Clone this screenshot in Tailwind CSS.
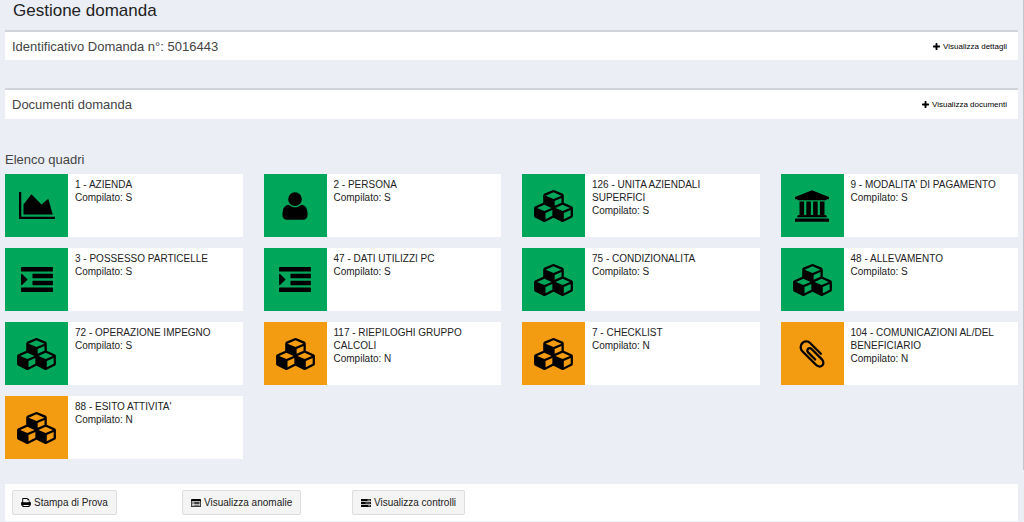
<!DOCTYPE html>
<html lang="it">
<head>
<meta charset="utf-8">
<meta name="viewport" content="width=device-width, initial-scale=1">
<title>Gestione domanda</title>
<script src="https://cdn.jsdelivr.net/npm/@tailwindcss/browser@4"></script>
</head>
<body class="relative min-h-screen overflow-x-hidden bg-[#ebeef5] font-['Liberation_Sans',Arial,sans-serif] text-[10px] leading-[13px] text-[#222]">

<!-- Shared icon symbols -->
<svg class="hidden" aria-hidden="true">
  <symbol id="area" viewBox="0 0 2048 1536"><path d="M2048 1408v128h-2048v-1536h128v1408h1920zm-384-1024l256 896h-1664v-576l448-576 576 576z"/></symbol>
  <symbol id="user" viewBox="0 0 1792 1792"><path d="M1600 1405q0 120-73 189.500t-194 69.500h-874q-121 0-194-69.500t-73-189.500q0-53 3.500-103.500t14-109 26.500-108.500 43-97.500 62-81 85.500-53.500 111.500-20q9 0 42 21.500t74.500 48 108 48 133.500 21.500 133.500-21.500 108-48 74.500-48 42-21.500q61 0 111.500 20t85.500 53.500 62 81 43 97.500 26.500 108.500 14 109 3.500 103.500zm-320-893q0 159-112.500 271.500t-271.500 112.500-271.500-112.500-112.500-271.500 112.500-271.500 271.500-112.500 271.500 112.500 112.500 271.500z"/></symbol>
  <symbol id="cubes" viewBox="0 0 2176 1792"><path fill-rule="evenodd" d="M640 1632l384-192v-314l-384 164v342zm-64-454l404-173-404-173-404 173zm1088 454l384-192v-314l-384 164v342zm-64-454l404-173-404-173-404 173zm-448-293l384-165v-266l-384 164v267zm-64-379l441-189-441-189-441 189zm1088 518v416q0 36-19 67t-52 47l-448 224q-25 14-57 14t-57-14l-448-224q-4-2-7-4-2 2-7 4l-448 224q-25 14-57 14t-57-14l-448-224q-33-16-52-47t-19-67v-416q0-38 21.500-70t56.500-48l434-186v-400q0-38 21.500-70t56.500-48l448-192q23-10 50-10t50 10l448 192q35 16 56.500 48t21.500 70v400l434 186q36 16 57 48t21 70z"/></symbol>
  <symbol id="bank" viewBox="-128 0 1920 1792"><path d="M832 0l960 384v128h-128q0 26-20.500 45t-48.500 19h-1526q-28 0-48.500-19t-20.500-45h-128v-128zm-704 640h256v768h128v-768h256v768h128v-768h256v768h128v-768h256v768h59q28 0 48.500 19t20.500 45v64h-1664v-64q0-26 20.500-45t48.500-19h59v-768zm1595 960q28 0 48.500 19t20.500 45v128h-1920v-128q0-26 20.500-45t48.500-19h1782z"/></symbol>
  <symbol id="indent" viewBox="0 0 1792 1408"><path d="M32 0h1728q32 0 32 32v192q0 32-32 32h-1728q-32 0-32-32v-192q0-32 32-32zM672 384h1088q32 0 32 32v192q0 32-32 32h-1088q-32 0-32-32v-192q0-32 32-32zM672 768h1088q32 0 32 32v192q0 32-32 32h-1088q-32 0-32-32v-192q0-32 32-32zM32 1152h1728q32 0 32 32v192q0 32-32 32h-1728q-32 0-32-32v-192q0-32 32-32zM352 704q0 14-9 23l-288 288q-9 9-23 9-32 0-32-32v-576q0-32 32-32 14 0 23 9l288 288q9 9 9 23z"/></symbol>
  <symbol id="clip" viewBox="0 0 1792 1792"><path d="M1596 1385q0 117-79 196t-196 79q-135 0-235-100l-777-776q-113-115-113-271 0-159 110-270t269-111q158 0 273 113l605 606q10 10 10 22 0 16-30.500 46.500t-46.500 30.500q-13 0-23-10l-606-607q-79-77-181-77-106 0-179 75t-73 181q0 105 76 181l776 777q63 63 145 63 64 0 106-42t42-106q0-82-63-145l-581-581q-26-24-60-24-29 0-48 19t-19 48q0 32 25 59l410 410q10 10 10 22 0 16-31 47t-47 31q-12 0-22-10l-410-410q-63-61-63-149 0-82 57-139t139-57q88 0 149 63l581 581q100 98 100 235z"/></symbol>
  <symbol id="plus" viewBox="0 0 1408 1408"><path d="M1408 608v192q0 96-96 96h-416v416q0 96-96 96h-192q-96 0-96-96v-416h-416q-96 0-96-96v-192q0-96 96-96h416v-416q0-96 96-96h192q96 0 96 96v416h416q96 0 96 96z"/></symbol>
  <symbol id="print" viewBox="0 0 1664 1536"><path fill-rule="evenodd" d="M384 1376h896v-192h-896zM352 736h960v-352h-160q-96 0-96-96v-128h-704zM1664 832v416q0 32-32 32h-192v160q0 96-96 96h-1024q-96 0-96-96v-160h-192q-32 0-32-32v-416q0-192 192-192v-544q0-96 96-96h736q96 0 160 64l152 152q72 72 72 160v264h64q192 0 192 192z"/></symbol>
  <symbol id="list" viewBox="0 0 1792 1408"><path fill-rule="evenodd" d="M160 0h1472q160 0 160 160v1088q0 160-160 160h-1472q-160 0-160-160v-1088q0-160 160-160zM128 384v832q0 64 64 64h1408q64 0 64-64v-832z"/><path d="M256 512h192v128h-192zM576 512h960v128h-960zM256 768h192v128h-192zM576 768h960v128h-960zM256 1024h192v128h-192zM576 1024h960v128h-960z"/></symbol>
  <symbol id="tasks" viewBox="0 0 1792 1408"><path fill-rule="evenodd" d="M64 0h1664q64 0 64 64v256q0 64-64 64h-1664q-64 0-64-64v-256q0-64 64-64zM1152 128v128h512v-128zM64 512h1664q64 0 64 64v256q0 64-64 64h-1664q-64 0-64-64v-256q0-64 64-64zM768 640v128h896v-128zM64 1024h1664q64 0 64 64v256q0 64-64 64h-1664q-64 0-64-64v-256q0-64 64-64zM1280 1152v128h384v-128z"/></symbol>
</svg>

<div class="absolute top-0 right-0 h-[470px] w-px bg-[#c3c6cd]"></div>

<main class="pr-1.5 pl-[5px]">
  <h1 class="h-[30px] pl-2 text-[17px] leading-[21px]">Gestione domanda</h1>

  <section class="flex h-[30px] items-center justify-between border-t-2 border-[#d0d3da] bg-white pr-[11px] pl-[7px]">
    <h2 class="text-[13px] text-[#444]">Identificativo Domanda n°: 5016443</h2>
    <button type="button" class="flex items-center gap-[3px] text-[8px] text-black"><svg class="size-[7px]" aria-hidden="true"><use href="#plus"/></svg>Visualizza dettagli</button>
  </section>

  <section class="mt-7 flex h-[31px] items-center justify-between border-t-2 border-[#d0d3da] bg-white pr-[11px] pl-[7px]">
    <h2 class="text-[13px] text-[#444]">Documenti domanda</h2>
    <button type="button" class="flex items-center gap-[3px] text-[8px] text-black"><svg class="size-[7px]" aria-hidden="true"><use href="#plus"/></svg>Visualizza documenti</button>
  </section>

  <h2 class="mt-[33px] text-[13px] leading-4 text-[#444]">Elenco quadri</h2>

  <ul class="mt-1.5 grid grid-cols-4 gap-x-[21px] gap-y-[11px]">
    <li class="flex min-h-[63px] bg-white"><span class="flex w-[63px] shrink-0 items-center justify-center bg-[#00a65a] text-black"><svg class="h-[27px] w-9 fill-current" aria-hidden="true"><use href="#area"/></svg></span><div class="px-[7px] pt-1"><h3>1 - AZIENDA</h3><p>Compilato: S</p></div></li>
    <li class="flex min-h-[63px] bg-white"><span class="flex w-[63px] shrink-0 items-center justify-center bg-[#00a65a] text-black"><svg class="size-8 fill-current" aria-hidden="true"><use href="#user"/></svg></span><div class="px-[7px] pt-1"><h3>2 - PERSONA</h3><p>Compilato: S</p></div></li>
    <li class="flex min-h-[63px] bg-white"><span class="flex w-[63px] shrink-0 items-center justify-center bg-[#00a65a] text-black"><svg class="h-8 w-[39px] fill-current" aria-hidden="true"><use href="#cubes"/></svg></span><div class="px-[7px] pt-1"><h3>126 - UNITA AZIENDALI<br>SUPERFICI</h3><p>Compilato: S</p></div></li>
    <li class="flex min-h-[63px] bg-white"><span class="flex w-[63px] shrink-0 items-center justify-center bg-[#00a65a] text-black"><svg class="h-8 w-[34px] fill-current" aria-hidden="true"><use href="#bank"/></svg></span><div class="px-[7px] pt-1"><h3>9 - MODALITA' DI PAGAMENTO</h3><p>Compilato: S</p></div></li>

    <li class="flex min-h-[63px] bg-white"><span class="flex w-[63px] shrink-0 items-center justify-center bg-[#00a65a] text-black"><svg class="h-[25px] w-8 fill-current" aria-hidden="true"><use href="#indent"/></svg></span><div class="px-[7px] pt-1"><h3>3 - POSSESSO PARTICELLE</h3><p>Compilato: S</p></div></li>
    <li class="flex min-h-[63px] bg-white"><span class="flex w-[63px] shrink-0 items-center justify-center bg-[#00a65a] text-black"><svg class="h-[25px] w-8 fill-current" aria-hidden="true"><use href="#indent"/></svg></span><div class="px-[7px] pt-1"><h3>47 - DATI UTILIZZI PC</h3><p>Compilato: S</p></div></li>
    <li class="flex min-h-[63px] bg-white"><span class="flex w-[63px] shrink-0 items-center justify-center bg-[#00a65a] text-black"><svg class="h-8 w-[39px] fill-current" aria-hidden="true"><use href="#cubes"/></svg></span><div class="px-[7px] pt-1"><h3>75 - CONDIZIONALITA</h3><p>Compilato: S</p></div></li>
    <li class="flex min-h-[63px] bg-white"><span class="flex w-[63px] shrink-0 items-center justify-center bg-[#00a65a] text-black"><svg class="h-8 w-[39px] fill-current" aria-hidden="true"><use href="#cubes"/></svg></span><div class="px-[7px] pt-1"><h3>48 - ALLEVAMENTO</h3><p>Compilato: S</p></div></li>

    <li class="flex min-h-[63px] bg-white"><span class="flex w-[63px] shrink-0 items-center justify-center bg-[#00a65a] text-black"><svg class="h-8 w-[39px] fill-current" aria-hidden="true"><use href="#cubes"/></svg></span><div class="px-[7px] pt-1"><h3>72 - OPERAZIONE IMPEGNO</h3><p>Compilato: S</p></div></li>
    <li class="flex min-h-[63px] bg-white"><span class="flex w-[63px] shrink-0 items-center justify-center bg-[#f39c12] text-black"><svg class="h-8 w-[39px] fill-current" aria-hidden="true"><use href="#cubes"/></svg></span><div class="px-[7px] pt-1"><h3>117 - RIEPILOGHI GRUPPO<br>CALCOLI</h3><p>Compilato: N</p></div></li>
    <li class="flex min-h-[63px] bg-white"><span class="flex w-[63px] shrink-0 items-center justify-center bg-[#f39c12] text-black"><svg class="h-8 w-[39px] fill-current" aria-hidden="true"><use href="#cubes"/></svg></span><div class="px-[7px] pt-1"><h3>7 - CHECKLIST</h3><p>Compilato: N</p></div></li>
    <li class="flex min-h-[63px] bg-white"><span class="flex w-[63px] shrink-0 items-center justify-center bg-[#f39c12] text-black"><svg class="size-8 fill-current" aria-hidden="true"><use href="#clip"/></svg></span><div class="px-[7px] pt-1"><h3>104 - COMUNICAZIONI AL/DEL<br>BENEFICIARIO</h3><p>Compilato: N</p></div></li>

    <li class="flex min-h-[63px] bg-white"><span class="flex w-[63px] shrink-0 items-center justify-center bg-[#f39c12] text-black"><svg class="h-8 w-[39px] fill-current" aria-hidden="true"><use href="#cubes"/></svg></span><div class="px-[7px] pt-1"><h3>88 - ESITO ATTIVITA'</h3><p>Compilato: N</p></div></li>
  </ul>

  <div class="mt-[25px] grid grid-cols-6 justify-items-start gap-x-[21px] bg-white px-[7px] py-1.5">
    <button type="button" class="flex h-[25px] items-center gap-[3px] rounded-xs border border-[#ddd] bg-[#f4f4f4] px-2 whitespace-nowrap"><svg class="h-[9px] w-[10px]" aria-hidden="true"><use href="#print"/></svg>Stampa di Prova</button>
    <button type="button" class="flex h-[25px] items-center gap-[3px] rounded-xs border border-[#ddd] bg-[#f4f4f4] px-2 whitespace-nowrap"><svg class="h-2 w-[10px]" aria-hidden="true"><use href="#list"/></svg>Visualizza anomalie</button>
    <button type="button" class="flex h-[25px] items-center gap-[3px] rounded-xs border border-[#ddd] bg-[#f4f4f4] px-2 whitespace-nowrap"><svg class="h-2 w-[10px]" aria-hidden="true"><use href="#tasks"/></svg>Visualizza controlli</button>
  </div>
</main>
</body>
</html>
